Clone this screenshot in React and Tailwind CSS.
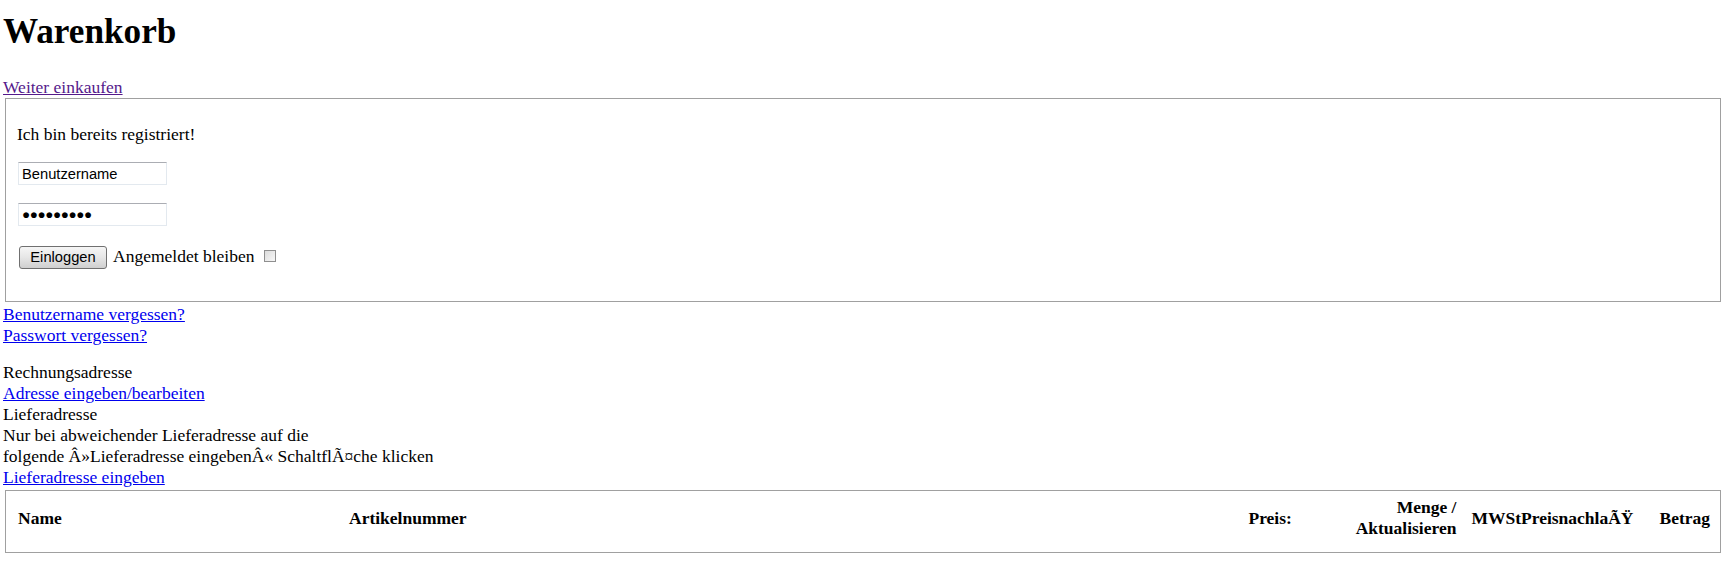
import React from "react";

// Warenkorb page: login box, address links and the cart table header
const linkCls = "text-[#0000ee] underline";

const App = () => {
  return (
    <div className="min-h-screen bg-white px-[3px] font-['Liberation_Serif',serif] text-[17.5px] leading-[21px] text-black">
      <h1 className="mt-[12px] mb-[25px] text-[35.2px] leading-[40px] font-bold">Warenkorb</h1>

      <div>
        <a href="#" className="text-[#551a8b] underline">
          Weiter einkaufen
        </a>
      </div>

      {/* login box */}
      <div className="ml-[2px] border border-[#a0a0a0] pl-[11px] pt-[25px] pb-[32px]">
        <p>Ich bin bereits registriert!</p>
        <input
          readOnly
          defaultValue="Benutzername"
          className="mt-[17px] ml-[1px] block h-[23px] w-[149px] border border-[#e3e9ef] border-t-[#abadb3] px-[3px] font-['Liberation_Sans',sans-serif] text-[14.7px] text-black outline-none"
        />
        <input
          readOnly
          defaultValue="●●●●●●●●●"
          className="mt-[18px] ml-[1px] block h-[23px] w-[149px] border border-[#e3e9ef] border-t-[#abadb3] px-[3px] font-['Liberation_Sans',sans-serif] text-[13.5px] tracking-[-0.4px] text-black outline-none"
        />
        <div className="mt-[20px] flex items-baseline">
          <button className="ml-[2px] h-[23px] w-[88px] rounded-[3px] border border-[#707070] bg-gradient-to-b from-[#f6f6f6] via-[#e6e6e6] to-[#cfcfcf] font-['Liberation_Sans',sans-serif] text-[14.7px] text-black">
            Einloggen
          </button>
          <span className="ml-[6px]">Angemeldet bleiben</span>
          <span className="ml-[10px] inline-block h-[12px] w-[12px] border border-[#8f8f8f] bg-gradient-to-br from-[#dcdcdc] to-[#f7f7f7]" />
        </div>
      </div>

      <div className="mt-[2px] flex flex-col items-start">
        <a href="#" className={linkCls}>
          Benutzername vergessen?
        </a>
        <a href="#" className={linkCls}>
          Passwort vergessen?
        </a>
      </div>

      <div className="mt-[16px] flex flex-col items-start">
        <span>Rechnungsadresse</span>
        <a href="#" className={linkCls}>
          Adresse eingeben/bearbeiten
        </a>
        <span>Lieferadresse</span>
        <span>Nur bei abweichender Lieferadresse auf die</span>
        <span>folgende Â»Lieferadresse eingebenÂ« SchaltflÃ¤che klicken</span>
        <a href="#" className={linkCls}>
          Lieferadresse eingeben
        </a>
      </div>

      {/* cart table header */}
      <div className="ml-[2px] mt-[2px] border border-[#a0a0a0] pl-[12px] pr-[10px] pt-[6px] pb-[13px]">
        <div className="flex items-center font-bold">
          <div className="w-[331px]">Name</div>
          <div className="flex-1">Artikelnummer</div>
          <div className="w-[58px]">Preis:</div>
          <div className="w-[150px] text-right">
            Menge /<br />
            Aktualisieren
          </div>
          <div className="ml-[15px] w-[188px]">MWStPreisnachlaÃŸ</div>
          <div className="text-right">Betrag</div>
        </div>
      </div>
    </div>
  );
};

export default App;
